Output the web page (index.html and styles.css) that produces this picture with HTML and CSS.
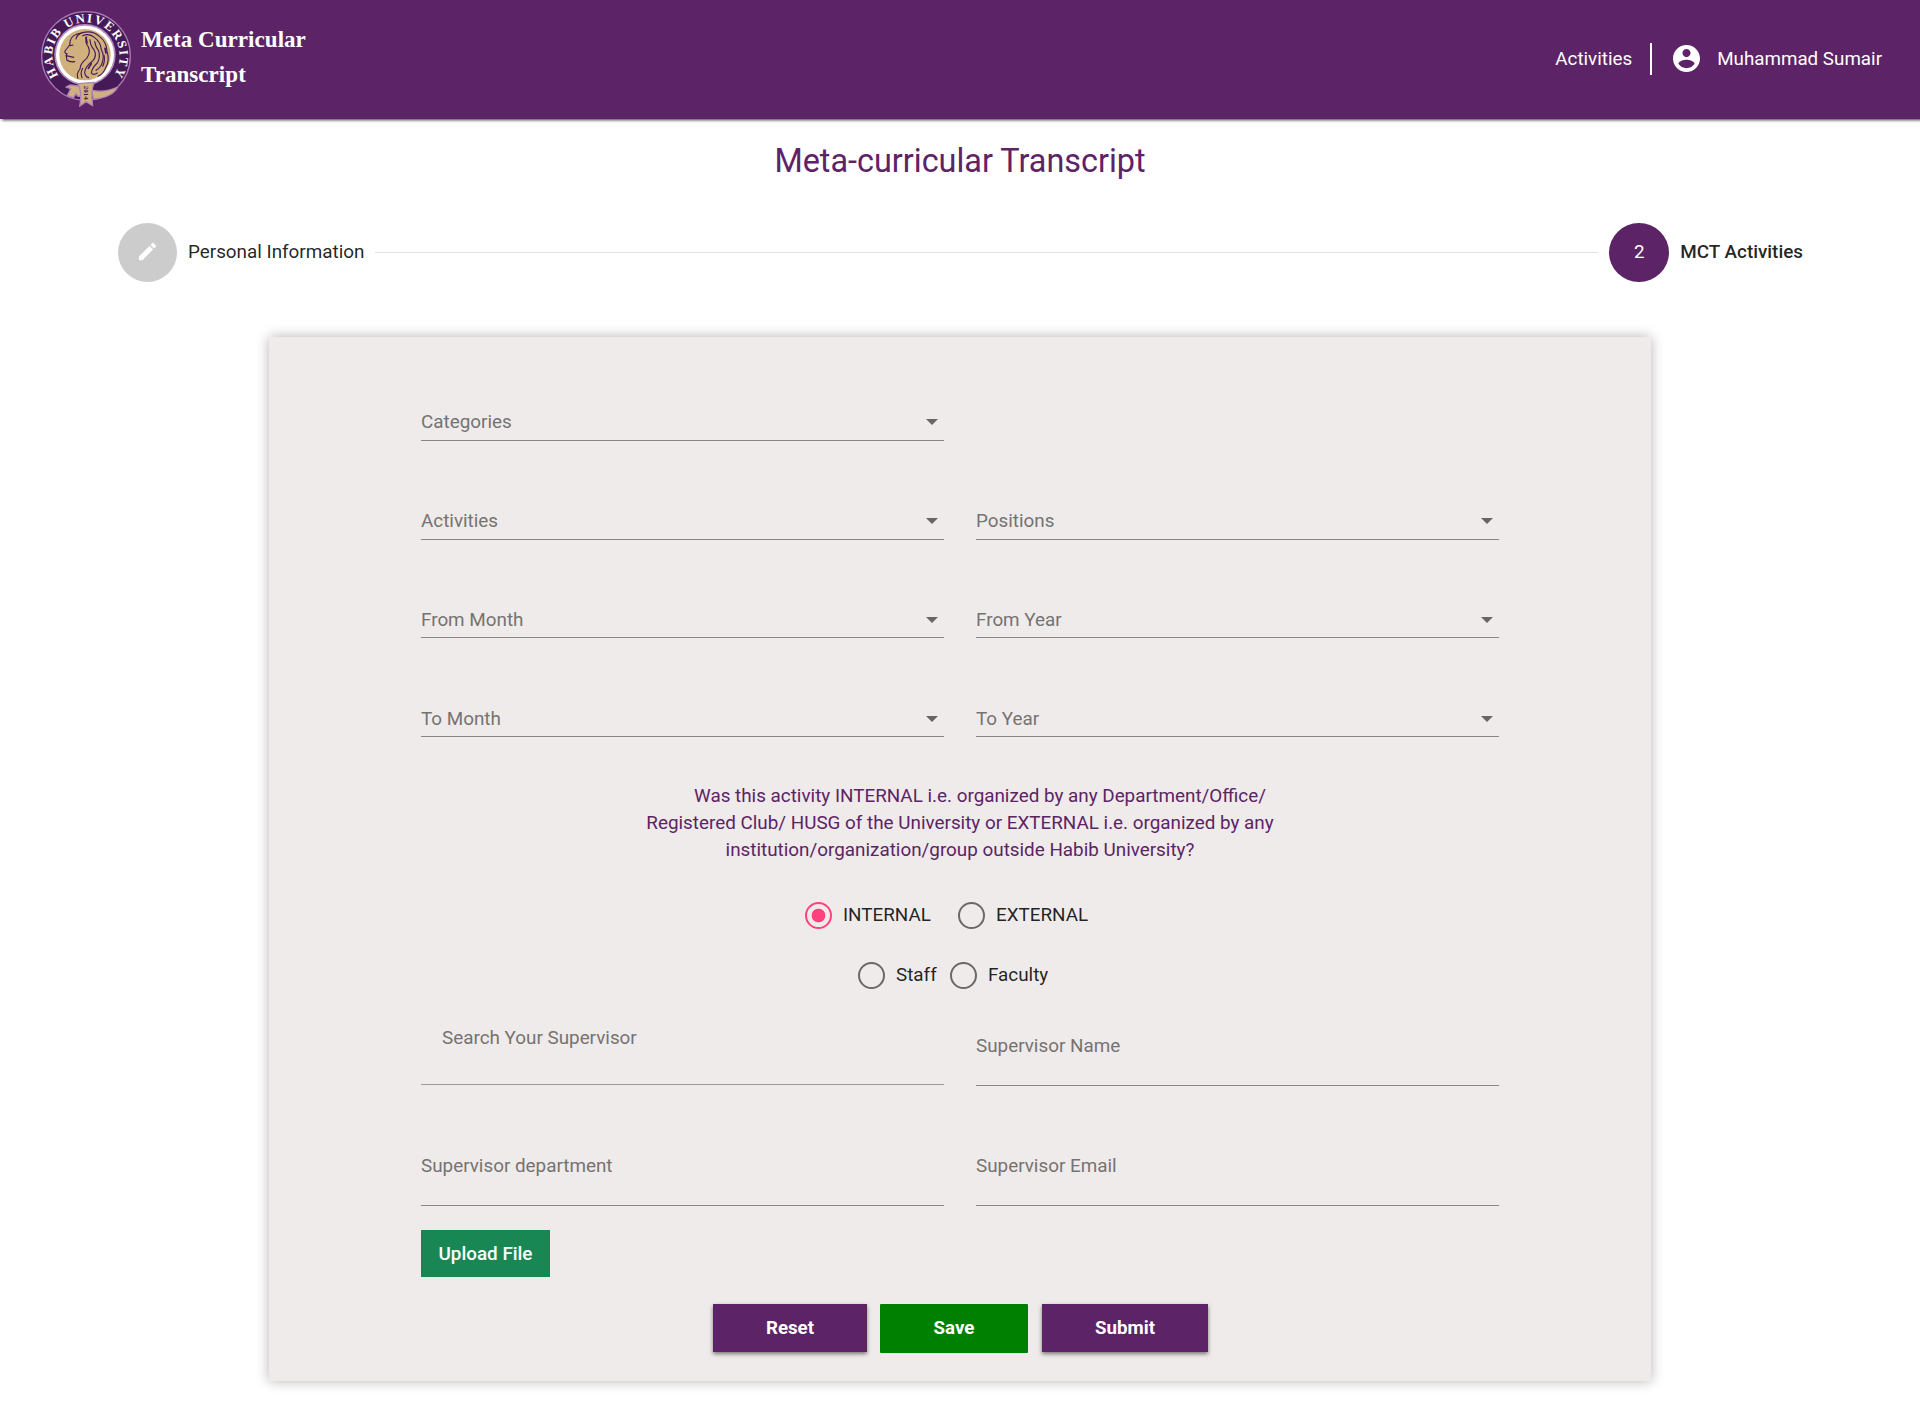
FILE: index.html
```html
<!DOCTYPE html>
<html lang="en">
<head>
<meta charset="utf-8">
<title>Meta Curricular Transcript</title>
<link rel="stylesheet" href="styles.css">
</head>
<body>
<header class="topbar">
  <div class="brand">
    <svg class="crest" viewBox="0 0 330 330" aria-label="Habib University">
      <defs><path id="ring" d="M 86 212 A 101 101 0 1 1 250 212"/></defs>
      <circle cx="168" cy="153" r="133" fill="#461a57" stroke="#a877b4" stroke-width="4"/>
      <circle cx="165" cy="149" r="92" fill="#b48fc0"/>
      <circle cx="165" cy="149" r="87" fill="#fff"/>
      <circle cx="165" cy="149" r="77" fill="#d0b07c"/>
      <text class="crest-text"><textPath href="#ring" textLength="440">HABIB UNIVERSITY</textPath></text>
      <g fill="none" stroke="#461a57" stroke-width="3.400" stroke-linecap="round" stroke-linejoin="round">
        <path d="M154 84 Q126 88 121 106 L119 120 L105 138 Q103 145 111 146 L108 152 L131 157 M109 155 L111 166 Q120 172 134 170 M120 122 l9 -2"/>
        <path d="M138 102 Q140 88 160 82 Q190 76 208 94 Q230 110 231 140 Q240 166 227 188 Q220 208 204 214"/>
        <path d="M158 92 Q178 84 194 98 Q212 112 214 134 Q224 152 217 172 Q212 188 198 196"/>
        <path d="M170 96 Q164 112 174 124 Q184 142 170 160 Q150 176 150 192 Q138 206 144 220"/>
        <path d="M180 104 Q180 120 192 134 Q202 152 188 168 Q166 184 164 202 Q166 216 176 218"/>
        <path d="M194 110 Q196 124 206 138 Q212 158 202 174 Q186 188 184 204 Q190 212 202 204"/>
        <path d="M158 190 Q150 204 156 218 M222 150 Q226 168 218 184"/>
        <path stroke-width="5" d="M168 98 l3 16 M184 176 l-9 14 M225 130 l3 14"/>
      </g>
      <g fill="#d0b07c" stroke="#b183b5" stroke-width="4" stroke-linejoin="round">
        <path d="M120 240 L155 244 L160 275 L142 273 L139 265 L130 278 L112 272 L122 251 L108 246 Z"/>
        <path d="M186 256 Q225 264 263 246 Q247 278 190 282 Z"/>
        <path d="M144 236 L193 232 Q181 255 188 302 L168 290 L149 304 Q155 275 149 249 Z"/>
      </g>
      <text class="crest-year" transform="translate(163 242) rotate(90)">2014</text>
    </svg>
    <div class="brand-name">Meta Curricular<br>Transcript</div>
  </div>
  <nav class="nav">
    <a class="nav-link">Activities</a>
    <span class="nav-divider"></span>
    <svg class="avatar" viewBox="2 2 20 20"><path fill="#fff" d="M12 2C6.48 2 2 6.48 2 12s4.48 10 10 10 10-4.480 10-10S17.520 2 12 2zm0 3c1.660 0 3 1.340 3 3s-1.340 3-3 3-3-1.340-3-3 1.340-3 3-3zm0 14.200c-2.500 0-4.710-1.280-6-3.220.030-1.990 4-3.080 6-3.080 1.990 0 5.970 1.090 6 3.080-1.290 1.940-3.500 3.220-6 3.220z"/></svg>
    <a class="nav-user">Muhammad Sumair</a>
  </nav>
</header>

<main>
  <h1 class="title">Meta-curricular Transcript</h1>

  <div class="stepper">
    <span class="step-icon"><svg viewBox="0 0 24 24"><path fill="#fff" d="M3 17.250V21h3.750L17.810 9.940l-3.750-3.750L3 17.250zM20.710 7.040c.390-.390.390-1.020 0-1.410l-2.340-2.340c-.390-.390-1.020-.390-1.410 0l-1.830 1.830 3.750 3.750 1.830-1.830z"/></svg></span>
    <span class="step-label">Personal Information</span>
    <span class="step-line"></span>
    <span class="step-icon step-icon-active">2</span>
    <span class="step-label step-label-active">MCT Activities</span>
  </div>

  <form class="card">
    <div class="selects">
      <div class="field select first">Categories</div>
      <div class="field select">Activities</div>
      <div class="field select">Positions</div>
      <div class="field select tight">From Month</div>
      <div class="field select tight">From Year</div>
      <div class="field select tight">To Month</div>
      <div class="field select tight">To Year</div>
    </div>

    <p class="question">Was this activity INTERNAL i.e. organized by any Department/Office/<br>Registered Club/ HUSG of the University or EXTERNAL i.e. organized by any<br>institution/organization/group outside Habib University?</p>

    <div class="radios scope">
      <label class="radio checked"><i></i>INTERNAL</label>
      <label class="radio"><i></i>EXTERNAL</label>
    </div>
    <div class="radios role">
      <label class="radio"><i></i>Staff</label>
      <label class="radio"><i></i>Faculty</label>
    </div>

    <div class="inputs">
      <div class="field search">Search Your Supervisor</div>
      <div class="field">Supervisor Name</div>
      <div class="field">Supervisor department</div>
      <div class="field">Supervisor Email</div>
    </div>

    <button type="button" class="upload">Upload File</button>

    <div class="actions">
      <button type="button" class="btn reset">Reset</button>
      <button type="button" class="btn save">Save</button>
      <button type="button" class="btn submit">Submit</button>
    </div>
  </form>
</main>
</body>
</html>
```
FILE: styles.css
```css
* { box-sizing: border-box; }

body {
  margin: 0;
  min-height: 1413px;
  background: #fff;
  color: rgba(0, 0, 0, 0.87);
  font: 400 18.85px/20px Roboto, sans-serif;
}

.topbar {
  position: relative;
  display: flex;
  justify-content: space-between;
  height: 119px;
  padding: 5px 38px 0 30px;
  background: #5c2366;
  box-shadow: 2px 1px 3px rgba(0, 0, 0, 0.8);
}

.brand { display: flex; }
.crest { width: 110px; height: 110px; }
.crest-text { font: 700 38px "Liberation Serif", serif; fill: #fff; }
.crest-year { font: 700 21px "Liberation Serif", serif; fill: #461a57; }

.brand-name {
  margin: 17px 0 0 1px;
  color: #fff;
  font: 700 23px/35px "Palatino Linotype", Palatino, "Liberation Serif", serif;
  letter-spacing: 0.05px;
}

.nav { display: flex; align-items: center; height: 107px; color: #fff; font-size: 18.8px; }
.nav-divider { width: 2px; height: 32px; margin: 0 21px 0 18px; background: #fff; }
.avatar { width: 27px; height: 27px; margin-right: 17px; }

.title {
  margin: 22px 0 0;
  color: #5c2366;
  font-size: 32.4px;
  font-weight: 400;
  line-height: 40px;
  text-align: center;
}

.stepper { display: flex; align-items: center; margin: 42px 118px 0; height: 59px; }
.step-icon {
  display: flex;
  align-items: center;
  justify-content: center;
  width: 59px;
  height: 59px;
  padding-bottom: 2px;
  border-radius: 50%;
  background: #ccc;
  color: #fff;
}
.step-icon svg { width: 23px; height: 23px; }
.step-icon-active { background: #5c2366; width: 60px; }
.step-label { margin: 0 11px; padding-bottom: 2px; }
.step-label-active { margin-right: -1px; font-weight: 500; }
.step-line { flex: 1; height: 1px; margin-right: 11px; background: #e0e0e0; }

.card {
  width: 1382px;
  height: 1044px;
  margin: 55px auto 0;
  padding: 5px 152px 0;
  background: #efebea;
  box-shadow: 0 0 12px rgba(0, 0, 0, 0.3);
}

.selects { display: grid; grid-template-columns: 523px 523px; grid-template-rows: 99px 99px 98px 99px; gap: 0 32px; align-items: end; }
.field { border-bottom: 1px solid #8a8887; color: #757372; padding-bottom: 29px; }
.select { display: flex; justify-content: space-between; align-items: center; padding: 0 6px 8px 0; }
.tight { padding-bottom: 7px; }
.select::after { content: ""; border: 6.5px solid transparent; border-top-color: #666; border-bottom: 0; }
.first + .select { grid-column: 1; }

.question { margin: 46px 0 0; color: #5c2366; line-height: 27px; text-align: center; text-indent: 40px; }

.radios { display: flex; height: 27px; }
.scope { margin: 38px 0 0 384px; }
.role { margin: 33px 0 0 437px; }
.radio { display: flex; flex: none; line-height: 27px; }
.radio i { flex: none; width: 27px; height: 27px; margin-right: 11px; border: 2px solid #6b6968; border-radius: 50%; }
.scope .radio { width: 153px; }
.role .radio { width: 92px; }
.checked i { border-color: #ff4081; background: radial-gradient(circle, #ff4081 6.5px, transparent 7.2px); }

.inputs { display: grid; grid-template-columns: 523px 523px; grid-template-rows: 97px 120px; gap: 0 32px; align-items: end; }
.search { margin-bottom: 1px; padding: 0 0 36px 21px; border-color: #9d9a99; }

.upload {
  display: block;
  width: 129px;
  height: 47px;
  margin-top: 24px;
  padding: 1px 0 0;
  border: 0;
  background: #198754;
  color: #fff;
  font: 500 18.85px/20px Roboto, sans-serif;
}

.actions { display: flex; align-items: flex-start; margin: 27px 0 0 292px; }
.btn {
  height: 48px;
  padding: 0;
  border: 0;
  background: #5c2366;
  color: #fff;
  font: 700 18.7px/20px Roboto, sans-serif;
  box-shadow: 0 2px 4px rgba(0, 0, 0, 0.5);
}
.reset { width: 154px; }
.save { width: 148px; height: 49px; margin: 0 14px 0 13px; padding-bottom: 1px; background: #008000; box-shadow: none; border-radius: 1px; }
.submit { width: 166px; }
```
